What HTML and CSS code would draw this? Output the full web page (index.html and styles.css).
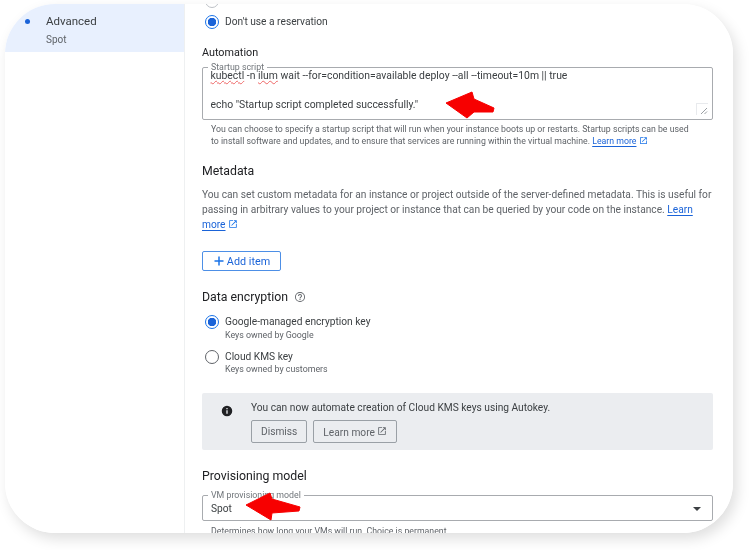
FILE: index.html
```html
<!DOCTYPE html>
<html lang="en">
<head>
<meta charset="utf-8">
<title>Advanced</title>
<link rel="stylesheet" href="styles.css">
</head>
<body>
<div class="card">
  <aside class="side">
    <div class="nav-item">
      <span class="dot"></span>
      <div>
        <div class="nav-title">Advanced</div>
        <div class="nav-sub">Spot</div>
      </div>
    </div>
  </aside>
  <main class="main">
    <div class="radio-row first"><span class="radio"></span></div>
    <div class="radio-row reservation"><span class="radio on"></span><span class="radio-text">Don't use a reservation</span></div>

    <h2 class="h-small automation">Automation</h2>
    <div class="field script">
      <span class="legend">Startup script</span>
      <div class="script-text"><span class="spell">kubectl</span> -n <span class="spell">ilum</span> wait --for=condition=available deploy --all --timeout=10m || true<br><br>echo "Startup script completed successfully."</div>
      <span class="grip"><svg width="11" height="11" viewBox="0 0 11 11"><path d="M4 10 10 4M7.5 10 10 7.5" stroke="#80868b" stroke-width=".8" fill="none"/></svg></span>
    </div>
    <p class="hint script-hint">You can choose to specify a startup script that will run when your instance boots up or restarts. Startup scripts can be used<br>to install software and updates, and to ensure that services are running within the virtual machine. <a class="link">Learn more</a> <svg class="ext" width="9" height="9" viewBox="0 0 24 24"><path d="M19 19H5V5h7V3H3v18h18v-9h-2zM14 3v2h3.6l-9.8 9.8 1.4 1.4L19 6.4V10h2V3z" fill="#1a73e8"/></svg></p>

    <h2 class="h-big metadata">Metadata</h2>
    <p class="para">You can set custom metadata for an instance or project outside of the server-defined metadata. This is useful for passing in arbitrary values to your project or instance that can be queried by your code on the instance. <a class="link">Learn more</a> <svg class="ext" width="10" height="10" viewBox="0 0 24 24"><path d="M19 19H5V5h7V3H3v18h18v-9h-2zM14 3v2h3.6l-9.8 9.8 1.4 1.4L19 6.4V10h2V3z" fill="#1a73e8"/></svg></p>
    <button class="add-btn"><svg width="12" height="12" viewBox="0 0 24 24"><path d="M10.5 3h3v7.5H21v3h-7.5V21h-3v-7.5H3v-3h7.5z" fill="#1a73e8"/></svg>Add item</button>

    <h2 class="h-big encryption">Data encryption <svg class="help" width="12" height="12" viewBox="0 0 24 24"><path d="M12 2a10 10 0 1 0 0 20 10 10 0 0 0 0-20zm0 18.2a8.2 8.2 0 1 1 0-16.4 8.2 8.2 0 0 1 0 16.4zM11 16h2v2h-2zm1-10a4 4 0 0 0-4 4h2a2 2 0 1 1 4 0c0 2-3 1.8-3 5h2c0-2.3 3-2.500 3-5a4 4 0 0 0-4-4z" fill="#5f6368"/></svg></h2>
    <div class="option">
      <span class="radio on"></span>
      <div><div class="radio-text">Google-managed encryption key</div><div class="sub">Keys owned by Google</div></div>
    </div>
    <div class="option second">
      <span class="radio"></span>
      <div><div class="radio-text">Cloud KMS key</div><div class="sub">Keys owned by customers</div></div>
    </div>

    <div class="banner">
      <svg class="info" width="12" height="12" viewBox="0 0 24 24"><path d="M12 1.500a10.500 10.500 0 1 0 0 21 10.500 10.500 0 0 0 0-21zM13.300 17.500h-2.600v-7h2.600zm0-9h-2.600V6h2.600z" fill="#202124"/></svg>
      <div>
        <div class="banner-text">You can now automate creation of Cloud KMS keys using Autokey.</div>
        <div class="banner-actions">
          <button class="btn">Dismiss</button>
          <button class="btn">Learn more <svg width="10" height="10" viewBox="0 0 24 24"><path d="M19 19H5V5h7V3H3v18h18v-9h-2zM14 3v2h3.600l-9.800 9.800 1.400 1.400L19 6.400V10h2V3z" fill="#5f6368"/></svg></button>
        </div>
      </div>
    </div>

    <h2 class="h-big provisioning">Provisioning model</h2>
    <div class="field select">
      <span class="legend">VM provisioning model</span>
      <span class="select-value">Spot</span>
      <span class="caret"></span>
    </div>
    <p class="hint select-hint">Determines how long your VMs will run. Choice is permanent</p>
  </main>
  <svg class="arrow a1" width="56" height="30" viewBox="0 0 56 30"><path d="M2 12 28 1 30 8 50 17 49 21 30 21 23 27Z" fill="#f70000" stroke="#f70000" stroke-linejoin="round"/></svg>
  <svg class="arrow a2" width="56" height="30" viewBox="0 0 56 30"><path d="M1 13 25 1 27 7 55 15 54 19 27 21 26 28Z" fill="#f70000" stroke="#f70000" stroke-linejoin="round"/></svg>
</div>
</body>
</html>
```

FILE: styles.css
```css
* { box-sizing: border-box; }
html, body { margin: 0; height: 100%; background: #fff; }
body { padding: 4px 17px 17px 5px; font-family: Roboto, "Noto Sans", sans-serif; overflow: hidden; }
.card {
  position: relative;
  height: 529px;
  display: flex;
  background: #fff;
  border-radius: 50px;
  overflow: hidden;
  filter: blur(.3px);
}
body::before {
  content: "";
  position: absolute;
  left: 5px; top: 4px;
  width: 728px; height: 529px;
  border-radius: 50px;
  box-shadow: 4px 6px 14px rgba(0, 0, 0, .13);
}
.side { width: 180px; flex: none; border-right: 1px solid #eef0f1; }
.nav-item { display: flex; height: 48px; background: #e8f0fe; padding: 10px 0 0 20px; }
.dot { width: 5px; height: 5px; margin: 5px 16px 0 0; border-radius: 50%; background: #1a63d8; flex: none; }
.nav-title { font-size: 11.500px; line-height: 15px; color: #3c4043; }
.nav-sub { font-size: 10px; line-height: 14px; margin-top: 4px; color: #5f6368; }

.main { flex: 1; padding: 0 20px 0 17px; min-width: 0; }
.radio {
  display: block; flex: none;
  width: 14px; height: 14px;
  border: 1.500px solid #5f6368;
  border-radius: 50%;
  background: #fff;
}
.radio.on { border-color: #1a73e8; background: radial-gradient(circle, #1a63d8 0 4px, #fff 4.500px); }
.radio-row { display: flex; align-items: center; gap: 6px; padding-left: 3px; }
.radio-row.first { height: 14px; margin-top: -10px; }
.radio-row.first .radio { border-color: #bdc1c6; }
.radio-row.reservation { margin-top: 7px; height: 14px; }
.radio-text { font-size: 10.200px; line-height: 14px; color: #3c4043; white-space: nowrap; }
.h-small, .h-big { margin: 0; font-weight: 400; color: #202124; }
.h-small { font-size: 10.800px; line-height: 14px; }
.h-big { font-size: 12.300px; line-height: 16px; }
.automation { margin-top: 17px; }
.field {
  position: relative;
  border: 1px solid #a8abaf;
  border-radius: 2px;
}
.legend {
  position: absolute;
  top: -5px; left: 5px;
  padding: 0 3px;
  background: #fff;
  font-size: 8.800px; line-height: 9px;
  color: #70757a;
  white-space: nowrap;
}
.script { height: 53px; margin-top: 7px; padding: 1px 8px 0 7.500px; }
.script-text { font-size: 10.400px; line-height: 14.500px; color: #3c4043; position: relative; }
.spell { text-decoration: underline wavy #e66; text-decoration-thickness: .5px; text-underline-offset: 1px; }
.grip { position: absolute; right: 4px; bottom: 4px; width: 12px; height: 12px; border: 1px solid #e8eaed; border-width: 1px 0 0 1px; display: flex; }
.hint { margin: 0; font-size: 8.760px; line-height: 12px; color: #5f6368; padding-left: 9px; }
.script-hint { margin-top: 3px; height: 24px; }
.link { color: #1a63d8; text-decoration: underline; text-underline-offset: 1.500px; }
.ext { vertical-align: -1px; }
.metadata { margin-top: 16px; }
.para { margin: 8px 0 0; font-size: 10.200px; line-height: 15px; color: #5f6368; }
.add-btn {
  display: flex; align-items: center; justify-content: center; gap: 2px;
  width: 79px; height: 20px;
  margin-top: 19px;
  background: #fff;
  border: 1px solid #4d8fe6;
  border-radius: 2px;
  padding: 0;
  font: 400 10.800px Roboto, sans-serif;
  color: #1a63d8;
}
.encryption { margin-top: 18px; display: flex; align-items: center; gap: 6px; }
.help { flex: none; }
.option { display: flex; gap: 6px; padding-left: 3px; margin-top: 10px; }
.option.second { margin-top: 9px; }
.option.second .sub { margin-top: -1px; }
.sub { font-size: 8.850px; line-height: 12px; color: #5f6368; }
.banner {
  display: flex;
  height: 57px;
  margin-top: 18px;
  padding: 8px 0 0 19px;
  background: #ebedf0;
  border-radius: 2px;
}
.info { margin: 4px 18px 0 0; flex: none; }
.banner-text { font-size: 10.200px; line-height: 14px; color: #3c4043; }
.banner-actions { display: flex; gap: 6px; margin-top: 5px; }
.btn {
  height: 23px; padding: 0 9px;
  background: transparent;
  border: 1px solid #9aa0a6;
  border-radius: 2px;
  font: 400 10.200px Roboto, sans-serif;
  color: #5f6368;
}
.provisioning { margin-top: 18px; }
.select { height: 26px; margin-top: 11px; display: flex; align-items: center; padding: 1px 8px 0; }
.select-value { font-size: 10.200px; color: #3c4043; }
.caret { position: absolute; right: 11px; top: 11px; border: 4px solid transparent; border-top: 4px solid #3c4043; border-bottom: 0; }
.select-hint { margin-top: 4px; }
.arrow { position: absolute; }
.a1 { left: 439px; top: 87px; }
.a2 { left: 240px; top: 488px; }
```
